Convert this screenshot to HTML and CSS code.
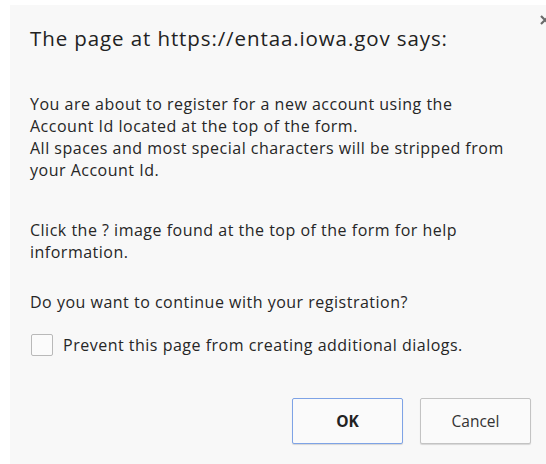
FILE: index.html
```html
<!DOCTYPE html>
<html>
<head>
<meta charset="utf-8">
<link rel="stylesheet" href="styles.css">
</head>
<body>
<div class="dialog">
  <button class="close" aria-label="Close">
    <svg width="10" height="10" viewBox="0 0 10 10"><path d="M1 1 L9 9 M9 1 L1 9" stroke="#6a6a6a" stroke-width="2.2"/></svg>
  </button>
  <h1 class="title">The page at https://entaa.iowa.gov says:</h1>
  <div class="message">
    <p class="para-first">You are about to register for a new account using the<br>Account Id located at the top of the form.<br>All spaces and most special characters will be stripped from<br>your Account Id.</p>
    <p class="para-help">Click the ? image found at the top of the form for help<br>information.</p>
    <p class="para-question">Do you want to continue with your registration?</p>
  </div>
  <label class="suppress"><span class="box"></span>Prevent this page from creating additional dialogs.</label>
  <div class="actions">
    <button class="btn btn-ok">OK</button>
    <button class="btn">Cancel</button>
  </div>
</div>
</body>
</html>
```
FILE: styles.css
```css
html, body {
  margin: 0;
  height: 100%;
  background: #ffffff;
}

body {
  padding: 5px 0 0 10px;
  box-sizing: border-box;
  font-family: "Open Sans", "Noto Sans", sans-serif;
  color: #262626;
}

.dialog {
  position: relative;
  height: 100%;
  background: #f8f8f8;
  padding: 18px 0 0 20px;
  box-sizing: border-box;
}

.close {
  position: absolute;
  top: 10px;
  right: -4px;
  border: 0;
  background: none;
  padding: 0;
  width: 10px;
  height: 10px;
}

.close svg { display: block; }

.title {
  margin: 0;
  font-size: 20.5px;
  font-weight: 400;
  letter-spacing: 0.9px;
  line-height: 30px;
  color: #222222;
}

.message {
  margin-top: 40px;
  font-size: 16px;
  letter-spacing: 0.5px;
  line-height: 22px;
}

.message p {
  margin: 0;
}

.para-first { margin-bottom: 38px !important; }
.para-help { margin-bottom: 28px !important; }
.para-question { margin-bottom: 21px !important; }

.suppress {
  display: flex;
  align-items: center;
  gap: 10px;
  font-size: 16px;
  letter-spacing: 0.5px;
  line-height: 22px;
  padding-left: 1px;
}

.box {
  flex: none;
  width: 22px;
  height: 22px;
  border: 1px solid #b9b9b9;
  border-radius: 2px;
  background: #fbfbfb;
  box-sizing: border-box;
}

.actions {
  display: flex;
  justify-content: flex-end;
  gap: 17px;
  margin-top: 42px;
  padding-right: 15px;
}

.btn {
  width: 111px;
  height: 46px;
  border: 1px solid #c3c3c3;
  border-radius: 2px;
  background: #fafafa;
  box-shadow: 0 1px 1px rgba(0, 0, 0, 0.14);
  font-family: "Open Sans", "Noto Sans", sans-serif;
  font-size: 15.5px;
  color: #333333;
}

.btn-ok {
  border-color: #7ea3e6;
  font-weight: 700;
  color: #222222;
}
```
